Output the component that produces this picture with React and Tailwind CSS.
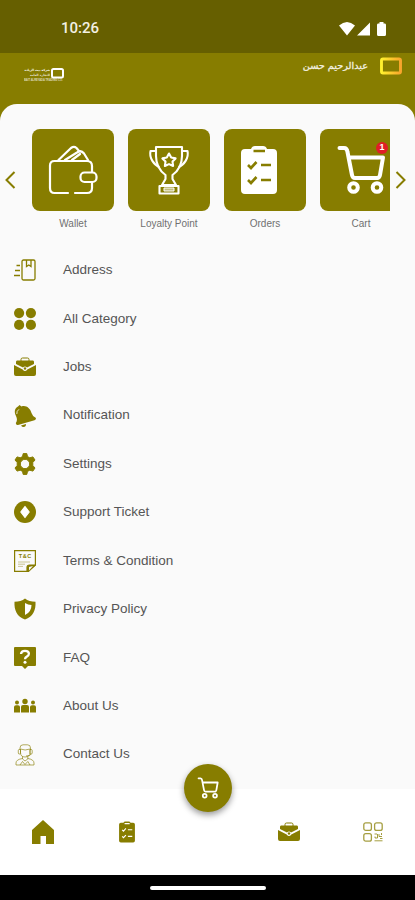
import React from 'react';

const OLIVE = '#877d00';

function WalletIcon() {
    return (
        <svg width="50" height="50" viewBox="0 0 50 50" fill="none" stroke="#fff" strokeWidth="2.200" strokeLinecap="round" strokeLinejoin="round">
            <path d="M20 48H6.500Q2 48 2 43V20.500Q2 16 6.500 16H39Q44 16 44 21V27M44 38V43Q44 48 39 48H27" />
            <rect x="32.500" y="27.500" width="16" height="9.500" rx="4" />
            <path d="M10.500 15L23 3Q26 .8 28.500 3L31 6M17 15L29 7.500Q33 4.500 36 8.500L40 15M24 15L32 9" />
        </svg>
    );
}

function TrophyIcon() {
    return (
        <svg width="42" height="50" viewBox="0 0 42 50" fill="none" stroke="#fff" strokeWidth="2.100" strokeLinejoin="round">
            <path d="M8 2H34V11C34 21 30 26 24.500 30V34L28 40H14L17.500 34V30C12 26 8 21 8 11Z" />
            <path d="M8 6H2.500C1 13 6 20 11.500 22M34 6H39.500C41 13 36 20 30.500 22" />
            <path d="M21 8.500L23.200 12.500L27.600 13.400L24.500 16.600L25.100 21L21 19.100L16.900 21L17.500 16.600L14.400 13.400L18.800 12.500Z" />
            <path d="M11.500 41H30.500V48.500H11.500Z" />
            <path d="M16 43H26V46H16Z" fill="#fff" fillOpacity=".5" strokeWidth="1" />
        </svg>
    );
}

function ClipboardIcon({ width, height, color, check }) {
    return (
        <svg width={width} height={height} viewBox="0 0 38 50" fill="none">
            <path d="M5 4H11Q12 1 15 1H23Q26 1 27 4H33Q37 4 37 8V45Q37 49 33 49H5Q1 49 1 45V8Q1 4 5 4Z" fill={color} />
            <path d="M13.500 6H25M8 20L11 23L16.500 17M21 20H31M8 35L11 38L16.500 32M21 35H31" stroke={check} strokeWidth="2.600" />
        </svg>
    );
}

function CartIcon({ width, height, stroke = 4 }) {
    return (
        <svg width={width} height={height} viewBox="0 0 50 50" fill="none" stroke="#fff" strokeWidth={stroke} strokeLinecap="round" strokeLinejoin="round">
            <path d="M3.500 3H8Q11 3 11.500 7L16 30Q16.500 33 19 33H42M12.500 12.500H47L44 30Q43.500 33 41 33" />
            <circle cx="17.500" cy="42.500" r="4.300" />
            <circle cx="41" cy="42.500" r="4.300" />
        </svg>
    );
}

function BriefcaseIcon({ size = 22 }) {
    return (
        <svg width={size} height={size} viewBox="0 0 22 22" fill={OLIVE}>
            <path d="M7 6V3.500Q7 2 8.500 2H13.500Q15 2 15 3.500V6" fill="none" stroke={OLIVE} strokeWidth="1" />
            <path d="M3 4.500H19Q20 4.500 20 6V8L13 11.500Q11 9.500 9 11.500L2 8V6Q2 4.500 3 4.500Z" />
            <path d="M0 9L8.700 13.500Q11 16.500 13.300 13.500L22 9V18Q22 20 20 20H2Q0 20 0 18Z" />
            <circle cx="11" cy="12.500" r="1.200" />
        </svg>
    );
}

function AddressIcon() {
    return (
        <svg width="22" height="22" viewBox="0 0 22 22" fill="none" stroke={OLIVE} strokeWidth="1.300">
            <rect x="8" y="1" width="13" height="20" rx="1.500" />
            <path d="M12.500 1V7.500L14.800 6L17 7.500V1M2.500 6.500H6M1 11.500H6M0 16.500H6" />
        </svg>
    );
}

function CategoryIcon() {
    return (
        <svg width="22" height="22" viewBox="0 0 22 22" fill={OLIVE}>
            <circle cx="5.100" cy="5.100" r="5.100" />
            <circle cx="16.900" cy="5.100" r="5.100" />
            <circle cx="5.100" cy="16.900" r="5.100" />
            <circle cx="16.900" cy="16.900" r="5.100" />
        </svg>
    );
}

function BellIcon() {
    return (
        <svg width="22" height="22" viewBox="0 0 22 22" fill={OLIVE}>
            <path d="M4 1.500L5.500 0L7.500 1.500C12 0 16 3 17.500 8Q18.500 11.500 22 13Q22 15 20.500 15.300L4 20Q2 20.500 1.800 18Q4 15 2 11C0 7 0.500 3.500 4 1.500Z" />
            <path d="M7 20.500L12 19Q12 22 9.500 22Q8 22 7 20.500Z" />
            <path d="M2.800 9Q2.500 6 5 4.300" fill="none" stroke="#fafafa" strokeWidth=".8" />
        </svg>
    );
}

function GearIcon() {
    return (
        <svg width="22" height="22" viewBox="0 0 22 22" fill={OLIVE}>
            <path
                fillRule="evenodd"
                stroke={OLIVE}
                strokeWidth="1"
                strokeLinejoin="round"
                d="M9.200 .6H12.800L13.500 3.600L15.800 4.800L18.900 3.900L21 7L18.800 9.500V12.500L21 15L18.900 18.100L15.800 17.200L13.500 18.400L12.800 21.400H9.200L8.500 18.400L6.200 17.200L3.100 18.100L1 15L3.200 12.500V9.500L1 7L3.100 3.900L6.200 4.800L8.500 3.600ZM11 6.300A4.700 4.700 0 1 0 11 15.700A4.700 4.700 0 1 0 11 6.300Z"
            />
        </svg>
    );
}

function SupportIcon() {
    return (
        <svg width="22" height="22" viewBox="0 0 22 22">
            <circle cx="11" cy="11" r="11" fill={OLIVE} />
            <path d="M11 5.500L15.200 11L11 16.500L6.800 11Z" fill="#fff" stroke="#fff" strokeWidth="1.200" strokeLinejoin="round" />
        </svg>
    );
}

function TermsIcon() {
    return (
        <svg width="22" height="22" viewBox="0 0 22 22" fill="none" stroke={OLIVE} strokeWidth="1.200">
            <path d="M.6 .6H21.400V15L14.500 21.400H.6Z" />
            <path d="M21.400 15H15.500Q13 15 13 17.500V21.400Z" fill={OLIVE} />
            <path d="M15 17L19 16L15 20.500Z" fill="#fafafa" stroke="none" />
            <text x="11.300" y="8.200" textAnchor="middle" fontSize="5.500" fontWeight="700" fontFamily="Liberation Sans" letterSpacing=".6" fill={OLIVE} stroke="none">T&amp;C</text>
            <path d="M4 12H16M4 14.200H11M4 16.400H9" strokeWidth=".7" strokeOpacity=".6" />
        </svg>
    );
}

function ShieldIcon() {
    return (
        <svg width="22" height="22" viewBox="0 0 22 22">
            <path d="M11 .5Q15 3.800 21.500 3.800C22 12 19 19 11 21.500C3 19 0 12 .5 3.800Q7 3.800 11 .5Z" fill={OLIVE} />
            <path d="M11 5Q14 7 17.500 7Q17.500 14 11 17Z" fill="#fff" />
        </svg>
    );
}

function FaqIcon() {
    return (
        <svg width="22" height="22" viewBox="0 0 22 22">
            <path d="M1 0H21Q22 0 22 1V18Q22 19 21 19H14L11 22L8 19H1Q0 19 0 18V1Q0 0 1 0Z" fill={OLIVE} />
            <path d="M7 7Q7.200 3.800 11 3.800Q14.900 3.800 14.900 6.800Q14.900 8.600 12.800 9.600Q11 10.500 11 12.200" fill="none" stroke="#fff" strokeWidth="2.300" />
            <circle cx="11" cy="15.300" r="1.500" fill="#fff" />
        </svg>
    );
}

function AboutIcon() {
    return (
        <svg width="22" height="22" viewBox="0 0 22 22" fill={OLIVE}>
            <circle cx="3" cy="7.500" r="2" />
            <circle cx="11" cy="6.500" r="2.700" />
            <circle cx="19" cy="7.500" r="2" />
            <path d="M0 17.500V12Q0 10.200 2 10.200H4Q6 10.200 6 12V17.500ZM7 17.500V12Q7 10 9 10H13Q15 10 15 12V17.500ZM16 17.500V12Q16 10.200 18 10.200H20Q22 10.200 22 12V17.500Z" />
        </svg>
    );
}

function ContactIcon() {
    return (
        <svg width="22" height="22" viewBox="0 0 22 22" fill="none" stroke={OLIVE} strokeWidth=".9" strokeOpacity=".7">
            <path d="M6 6V4Q6 .8 9 .8H13.500Q16.500 .8 16.500 4V6M6.500 5Q11 7 16 5V8.500Q16 13 11 13Q6.500 13 6.500 8.500Z" />
            <rect x="4.300" y="5.500" width="2.200" height="4.500" rx="1" />
            <rect x="16" y="5.500" width="2.200" height="4.500" rx="1" />
            <path d="M17 10Q17 12 12 12M8.500 12.500V15L11 17L13.800 15V12.500M8.500 14.500Q2 15.500 2 19V21H20V19Q20 15.500 13.800 14.500M6 21L8.500 17.500L11 20.500L13.800 17.500L16 21" />
        </svg>
    );
}

function QrIcon() {
    return (
        <svg width="20" height="20" viewBox="0 0 20 20" fill="none" stroke={OLIVE} strokeWidth="1.300" strokeOpacity=".75">
            <rect x=".8" y=".8" width="7.600" height="7.600" rx="2" />
            <rect x="11.600" y=".8" width="7.600" height="7.600" rx="2" />
            <rect x=".8" y="11.600" width="7.600" height="7.600" rx="2" />
            <path d="M11.500 12H14M16 12V14.500H19M12 14.500V16H14.500V12M18.500 11V13M11.500 18.800H19.500M17 16.500H19.500" strokeWidth="1" />
        </svg>
    );
}

const cards = [
    { label: 'Wallet', icon: <WalletIcon /> },
    { label: 'Loyalty Point', icon: <TrophyIcon /> },
    { label: 'Orders', icon: <ClipboardIcon width={38} height={50} color="#fff" check={OLIVE} /> },
    { label: 'Cart', icon: <CartIcon width={50} height={50} />, badge: 1 },
];

const menu = [
    { label: 'Address', icon: AddressIcon },
    { label: 'All Category', icon: CategoryIcon },
    { label: 'Jobs', icon: BriefcaseIcon },
    { label: 'Notification', icon: BellIcon },
    { label: 'Settings', icon: GearIcon },
    { label: 'Support Ticket', icon: SupportIcon },
    { label: 'Terms & Condition', icon: TermsIcon },
    { label: 'Privacy Policy', icon: ShieldIcon },
    { label: 'FAQ', icon: FaqIcon },
    { label: 'About Us', icon: AboutIcon },
    { label: 'Contact Us', icon: ContactIcon },
];

function StatusBar() {
    return (
        <div className="flex h-[53px] items-center justify-between bg-[#665f00] pt-1 pr-7 pl-[61px] text-white">
            <span className="font-[Roboto] text-[15px] font-medium text-[#f3f1e4]">10:26</span>
            <svg width="48" height="16" viewBox="0 0 48 16" fill="#fff">
                <path d="M0 4.500Q8 -2.500 16 4.500L8 14.500ZM31 1.500V14.500H18ZM39 2.500H40.500V1H44.500V2.500H46Q47 2.500 47 4V13.500Q47 15 45.500 15H39.500Q38 15 38 13.500V4Q38 2.500 39 2.500Z" />
            </svg>
        </div>
    );
}

function Header() {
    return (
        <header className="flex h-[51px] justify-between pr-[13px] pl-6 text-white">
            <div className="mt-[15px] w-10">
                <div className="flex items-start gap-px">
                    <div className="w-[26px] font-['DejaVu_Sans',sans-serif] font-bold whitespace-nowrap" dir="rtl">
                        <p className="text-[3px] leading-[5px]">شركة بيت الريادة</p>
                        <p className="text-[3px] leading-[4px] opacity-80">للتجارة العامة</p>
                    </div>
                    <svg className="shrink-0" width="13" height="11" viewBox="0 0 13 11" fill="none">
                        <rect x="1" y="1" width="11" height="8.500" rx="1.500" stroke="#fff" strokeWidth="2" />
                    </svg>
                </div>
                <p className="text-[2.6px] leading-[3px] font-bold whitespace-nowrap opacity-70">BAIT ALREYADA TRADING CO.</p>
            </div>
            <div className="mt-[3px] flex h-[20px] items-center gap-3">
                <span dir="rtl" className="font-['DejaVu_Sans',sans-serif] text-[9.7px] text-[#f3f1e0] [-webkit-text-stroke:0.3px_#f3f1e0]">عبدالرحيم حسن</span>
                <svg width="22" height="18" viewBox="0 0 22 18" fill="none">
                    <defs>
                        <linearGradient id="frame" x1="0" x2="1" y1="0" y2="0">
                            <stop stopColor="#fff02e" />
                            <stop offset="1" stopColor="#f9a52c" />
                        </linearGradient>
                    </defs>
                    <rect x="1.500" y="2" width="19" height="14" rx="1.500" stroke="url(#frame)" strokeWidth="2.900" />
                </svg>
            </div>
        </header>
    );
}

function Carousel() {
    return (
        <div className="flex h-[102px] items-start">
            <svg className="mt-[41px] ml-1 shrink-0" width="28" height="20" viewBox="0 0 28 20" fill="none" stroke={OLIVE} strokeWidth="2">
                <path d="M10.500 2L2.500 10L10.500 18" />
            </svg>
            <div className="flex w-[358px] shrink-0 gap-[14px] overflow-hidden">
                {cards.map((card) => (
                    <div key={card.label} className="w-[82px] shrink-0 text-center">
                        <div className="relative flex h-[82px] items-center justify-center rounded-lg bg-[#877d00]">
                            <div className={card.label === 'Orders' ? '-ml-3' : ''}>{card.icon}</div>
                            {card.badge && (
                                <span className="absolute top-[13px] left-[56px] flex h-3 w-3 items-center justify-center rounded-full bg-[#e01e26] text-[9px] font-bold text-white">{card.badge}</span>
                            )}
                        </div>
                        <p className="mt-[7px] text-[10px] leading-3 text-[#707070]">{card.label}</p>
                    </div>
                ))}
            </div>
            <svg className="mt-[41px] ml-[5px] shrink-0" width="12" height="20" viewBox="0 0 12 20" fill="none" stroke={OLIVE} strokeWidth="2">
                <path d="M1.500 2L9.500 10L1.500 18" />
            </svg>
        </div>
    );
}

function BottomNav() {
    return (
        <nav className="relative flex h-[86px] items-center bg-white">
            <svg className="ml-[31px]" width="24" height="26" viewBox="0 0 24 26" fill={OLIVE}>
                <path d="M12 1L23 11V25H15V17H9.500V25H1V11Z" />
            </svg>
            <div className="ml-[63px]">
                <ClipboardIcon width={18} height={22} color={OLIVE} check="#fff" />
            </div>
            <div className="ml-[142px]">
                <BriefcaseIcon />
            </div>
            <div className="ml-[63px]">
                <QrIcon />
            </div>
            <div className="absolute -top-[25px] left-[184px] flex h-12 w-12 items-center justify-center rounded-full bg-[#877d00] shadow-[0_3px_6px_rgba(0,0,0,0.4)]">
                <CartIcon width={22} height={22} />
            </div>
        </nav>
    );
}

export default function App() {
    return (
        <div className="flex h-[900px] w-[415px] flex-col overflow-hidden bg-[#877d00] font-['Liberation_Sans',sans-serif]">
            <StatusBar />
            <Header />
            <main className="h-[685px] rounded-t-[17px] bg-[#fafafa] pt-[25px]">
                <Carousel />
                <ul className="mt-[15px]">
                    {menu.map(({ label, icon: Icon }) => (
                        <li key={label} className="flex h-[48.45px] items-center pl-[14px]">
                            <Icon />
                            <span className="ml-[27px] text-[13.5px] text-[#555]">{label}</span>
                        </li>
                    ))}
                </ul>
            </main>
            <BottomNav />
            <div className="flex flex-1 items-center justify-center bg-black">
                <div className="h-1 w-[116px] rounded-full bg-white" />
            </div>
        </div>
    );
}
